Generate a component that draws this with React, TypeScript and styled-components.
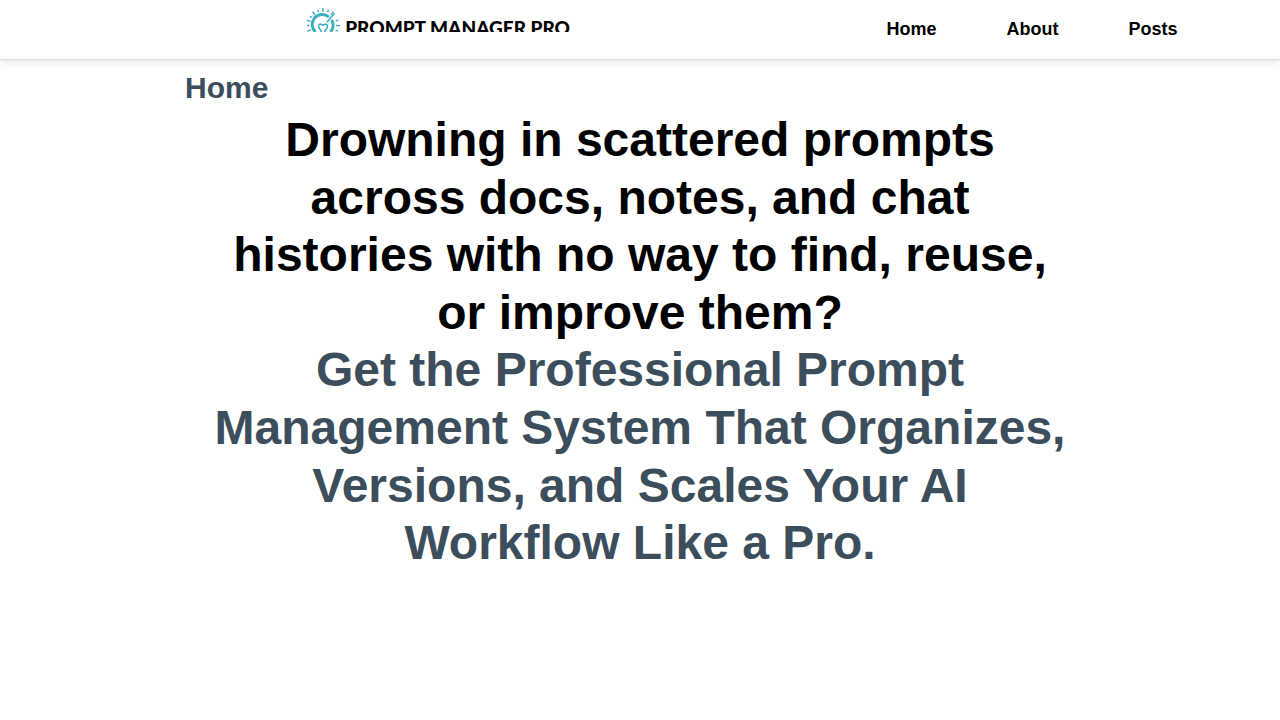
import React from "react";
import styled, { createGlobalStyle } from "styled-components";

const GlobalStyle = createGlobalStyle`
  * { box-sizing: border-box; }
  body {
    margin: 0;
    background: #fff;
    color: #000;
    font-family: "Liberation Sans", Arial, Helvetica, sans-serif;
  }
`;

const Header = styled.header`
  display: flex;
  align-items: flex-start;
  justify-content: space-between;
  height: 60px;
  padding: 8px 8% 0 24%;
  background: #fff;
  border-bottom: 1px solid #dcdcdc;
  box-shadow: 0 2px 8px rgba(0, 0, 0, 0.12);
`;

const Brand = styled.a`
  display: flex;
  align-items: flex-start;
  gap: 4px;
  height: 24px;
  margin-left: -2px;
  overflow: hidden;
  color: #000;
  text-decoration: none;
`;

const BrandMark = styled.svg`
  flex: none;
  width: 36px;
  height: 36px;
`;

const BrandName = styled.span`
  padding-top: 8px;
  font: 900 19px/24px Lato, sans-serif;
  white-space: nowrap;
`;

const Nav = styled.nav`
  display: flex;
  gap: 70px;
  padding-top: 10px;
`;

const NavLink = styled.a`
  color: #000;
  font-size: 18px;
  font-weight: 700;
  line-height: 22px;
  text-decoration: none;
`;

const Main = styled.main`
  max-width: 910px;
  margin: 0 auto;
  padding-top: 10px;
`;

const PageTitle = styled.h1`
  margin: 0;
  color: #3c4d5c;
  font-size: 30px;
  line-height: 36px;
`;

const Hero = styled.h2<{ $tone: string }>`
  margin: 0;
  padding: 0 25px;
  color: ${({ $tone }) => $tone};
  font-size: 48px;
  line-height: 1.2;
  text-align: center;
`;

const Intro = styled.section`
  padding-top: 5px;
`;

const ticks = [-112, -92, -74, -56, -38, -19, 0, 20, 38, 72, 92, 112];

function Logo() {
  return (
    <BrandMark viewBox="0 0 36 36" fill="none" stroke="#38afc0" aria-hidden="true">
      {ticks.map((angle, i) => (
        <path
          key={angle}
          d={i % 2 ? "M18 1v2.500" : "M18 0v4"}
          strokeWidth="1.4"
          transform={`rotate(${angle} 18 17)`}
        />
      ))}
      <path d="M10.500 24A10 10 0 0 1 24 9M26.500 12A10 10 0 0 1 25.500 24" strokeWidth="3" />
      <path d="M22 14L29.500 5.500" strokeWidth="1.600" />
      <path
        d="M16 25v-2.500c-4-4-2.500-7 0-6.300 1 .2 1.500 1 2 1s1-.8 2-1c2.500-.7 4 2.300 0 6.300V25"
        strokeWidth="1.600"
      />
    </BrandMark>
  );
}

export default function App() {
  return (
    <>
      <GlobalStyle />
      <Header>
        <Brand href="#" aria-label="Prompt Manager Pro">
          <Logo />
          <BrandName>PROMPT MANAGER PRO</BrandName>
        </Brand>
        <Nav aria-label="Main">
          <NavLink href="#">Home</NavLink>
          <NavLink href="#about">About</NavLink>
          <NavLink href="#posts">Posts</NavLink>
        </Nav>
      </Header>
      <Main>
        <PageTitle>Home</PageTitle>
        <Intro>
          <Hero $tone="#000">
            Drowning in scattered prompts across docs, notes, and chat histories
            with no way to find, reuse, or improve them?
          </Hero>
          <Hero $tone="#3c4d5c">
            Get the Professional Prompt Management System That Organizes,
            Versions, and Scales Your AI Workflow Like a Pro.
          </Hero>
        </Intro>
      </Main>
    </>
  );
}
